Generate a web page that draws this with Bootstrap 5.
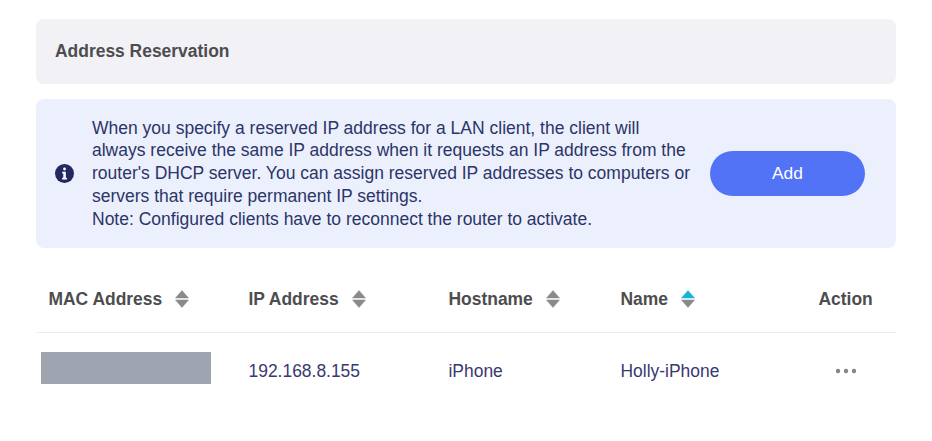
<!DOCTYPE html>
<html lang="en"><head><meta charset="utf-8">
<link rel="stylesheet" href="https://cdn.jsdelivr.net/npm/bootstrap@5.3.0/dist/css/bootstrap.min.css">
<style>
html,body{height:441px;overflow:hidden;background:#fff}
body{font-family:"Liberation Sans",Arial,sans-serif;padding:19px 36px 0}
.page-head{height:65px;background:#f2f1f6;border-radius:8px;padding:0 0 1px 19px;color:#4d4d4f;font-size:17.45px;font-weight:700}
.info-box{height:149px;margin-top:15px;background:#ecf0fd;border-radius:8px;padding-left:19px;color:#2b3568;font-size:17.5px;line-height:22.75px}
.info-text{width:600px;margin-left:18px;margin-right:18px}
.add-btn{width:155px;height:45px;border-radius:23px;background:#5373f7;color:#fff;border:0;font-size:17.4px;font-weight:400;padding:0}
.res-table{margin-top:15px;width:860px;color:#39396f;font-size:17.45px}
.hrow{height:70px;border-bottom:1px solid #ececf2;font-weight:700;color:#4d4d4f;padding-top:3px}
.brow{height:76px}
.c1{width:212.5px;padding-left:12.5px}.c2{width:200px}.c3{width:172px}.c4{width:198px}.c5{flex:1}
.sorter{margin-left:13px;display:block}
.mask{width:170px;height:32px;background:#9fa5b0;margin-left:-7.5px;margin-top:-7px}
</style></head><body>
<div class="page-head d-flex align-items-center">Address Reservation</div>
<div class="info-box d-flex align-items-center">
<svg width="19" height="19" viewBox="0 0 19 19" class="flex-shrink-0"><circle cx="9.5" cy="9.5" r="9.5" fill="#23285f"/><rect x="8.1" y="3.6" width="2.8" height="2.8" rx="1.3" fill="#fff"/><path d="M7.2 7.8h3.6v6h1.1v1.6H7.1v-1.6h1.2V9.4H7.2z" fill="#fff"/></svg>
<div class="info-text">When you specify a reserved IP address for a LAN client, the client will always receive the same IP address when it requests an IP address from the router's DHCP server. You can assign reserved IP addresses to computers or servers that require permanent IP settings.<br>Note: Configured clients have to reconnect the router to activate.</div>
<button class="btn add-btn flex-shrink-0" type="button">Add</button>
</div>
<div class="res-table">
<div class="hrow d-flex align-items-center">
<div class="c1 d-flex align-items-center">MAC Address<svg class="sorter" width="14" height="18" viewBox="0 0 14 18"><path d="M7 .5l6.5 7.5H.5z" fill="#8a8a8c" stroke="#8a8a8c" stroke-width=".5" stroke-linejoin="round"/><path d="M7 17.5l6.5-7.5H.5z" fill="#8a8a8c" stroke="#8a8a8c" stroke-width=".5" stroke-linejoin="round"/></svg></div>
<div class="c2 d-flex align-items-center">IP Address<svg class="sorter" width="14" height="18" viewBox="0 0 14 18"><path d="M7 .5l6.5 7.5H.5z" fill="#8a8a8c" stroke="#8a8a8c" stroke-width=".5" stroke-linejoin="round"/><path d="M7 17.5l6.5-7.5H.5z" fill="#8a8a8c" stroke="#8a8a8c" stroke-width=".5" stroke-linejoin="round"/></svg></div>
<div class="c3 d-flex align-items-center">Hostname<svg class="sorter" width="14" height="18" viewBox="0 0 14 18"><path d="M7 .5l6.5 7.5H.5z" fill="#8a8a8c" stroke="#8a8a8c" stroke-width=".5" stroke-linejoin="round"/><path d="M7 17.5l6.5-7.5H.5z" fill="#8a8a8c" stroke="#8a8a8c" stroke-width=".5" stroke-linejoin="round"/></svg></div>
<div class="c4 d-flex align-items-center">Name<svg class="sorter" width="14" height="18" viewBox="0 0 14 18"><path d="M7 .5l6.5 7.5H.5z" fill="#13b5cf" stroke="#13b5cf" stroke-width=".5" stroke-linejoin="round"/><path d="M7 17.5l6.5-7.5H.5z" fill="#8a8a8c" stroke="#8a8a8c" stroke-width=".5" stroke-linejoin="round"/></svg></div>
<div class="c5">Action</div>
</div>
<div class="brow d-flex align-items-center">
<div class="c1"><div class="mask"></div></div>
<div class="c2">192.168.8.155</div>
<div class="c3">iPhone</div>
<div class="c4">Holly-iPhone</div>
<div class="c5"><svg width="22" height="6" viewBox="0 0 22 6" class="d-block ms-3"><circle cx="3" cy="3" r="2.2" fill="#85858b"/><circle cx="11" cy="3" r="2.2" fill="#85858b"/><circle cx="19" cy="3" r="2.2" fill="#85858b"/></svg></div>
</div>
</div>
</body></html>
